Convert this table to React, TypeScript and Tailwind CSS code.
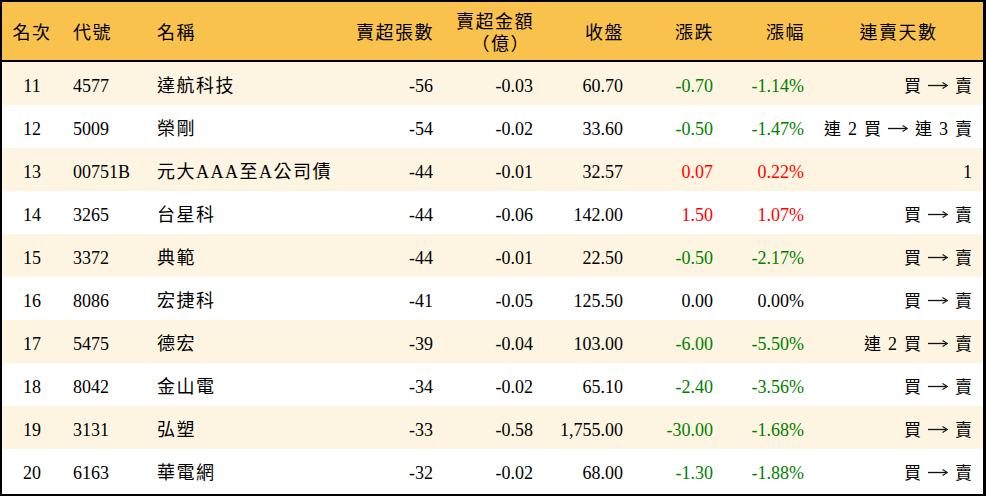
const rows = [
  { rank: 11, code: "4577", name: "達航科技", lots: "-56", amt: "-0.03", close: "60.70", chg: "-0.70", pct: "-1.14%", streak: "買 → 賣" },
  { rank: 12, code: "5009", name: "榮剛", lots: "-54", amt: "-0.02", close: "33.60", chg: "-0.50", pct: "-1.47%", streak: "連 2 買 → 連 3 賣" },
  { rank: 13, code: "00751B", name: "元大AAA至A公司債", lots: "-44", amt: "-0.01", close: "32.57", chg: "0.07", pct: "0.22%", streak: "1" },
  { rank: 14, code: "3265", name: "台星科", lots: "-44", amt: "-0.06", close: "142.00", chg: "1.50", pct: "1.07%", streak: "買 → 賣" },
  { rank: 15, code: "3372", name: "典範", lots: "-44", amt: "-0.01", close: "22.50", chg: "-0.50", pct: "-2.17%", streak: "買 → 賣" },
  { rank: 16, code: "8086", name: "宏捷科", lots: "-41", amt: "-0.05", close: "125.50", chg: "0.00", pct: "0.00%", streak: "買 → 賣" },
  { rank: 17, code: "5475", name: "德宏", lots: "-39", amt: "-0.04", close: "103.00", chg: "-6.00", pct: "-5.50%", streak: "連 2 買 → 賣" },
  { rank: 18, code: "8042", name: "金山電", lots: "-34", amt: "-0.02", close: "65.10", chg: "-2.40", pct: "-3.56%", streak: "買 → 賣" },
  { rank: 19, code: "3131", name: "弘塑", lots: "-33", amt: "-0.58", close: "1,755.00", chg: "-30.00", pct: "-1.68%", streak: "買 → 賣" },
  { rank: 20, code: "6163", name: "華電網", lots: "-32", amt: "-0.02", close: "68.00", chg: "-1.30", pct: "-1.88%", streak: "買 → 賣" },
];

function tone(v: string) {
  if (v.startsWith("-")) return "text-[#008000]";
  if (parseFloat(v) > 0) return "text-[#ff0000]";
  return "text-black";
}

function Arrow() {
  return (
    <svg width="20" height="10" viewBox="0 0 20 10" className="mt-[-3px]" aria-label="→">
      <path d="M0 5.5H18" stroke="#111" strokeWidth="1.3" />
      <path d="M14.5 2.5L19.5 5.5L14.5 8.5" fill="none" stroke="#111" strokeWidth="1.1" />
    </svg>
  );
}

function Streak({ text }: { text: string }) {
  const parts = text.split(" ");
  return (
    <div className="w-[169px] shrink-0 pr-[11px] flex justify-end items-center gap-[7px] whitespace-nowrap">
      {parts.map((p, k) =>
        p === "→" ? (
          <Arrow key={k} />
        ) : (
          <span key={k} className={/\d/.test(p) ? "text-[18px]" : "text-[17px]"}>
            {p}
          </span>
        )
      )}
    </div>
  );
}

export default function App() {
  return (
    <div
      className="w-[986px] h-[496px] bg-white text-black text-[18px] border-2 border-r-[3px] border-black overflow-hidden"
      style={{ fontFamily: '"Liberation Serif", "Noto Sans CJK TC", serif' }}
    >
      <div className="flex h-[60px] items-center pt-[4px] bg-[#f9c24d] border-b-2 border-black tracking-[1.5px] *:shrink-0">
        <div className="w-[60px] text-center">名次</div>
        <div className="w-[85px] pl-[11px]">代號</div>
        <div className="w-[193px] pl-[10px]">名稱</div>
        <div className="w-[103px] pr-[9px] text-right">賣超張數</div>
        <div className="w-[100px] pr-[9px] text-right leading-[22px]">
          <div>賣超金額</div>
          <div className="pr-[4px]">（億）</div>
        </div>
        <div className="w-[90px] pr-[9px] text-right">收盤</div>
        <div className="w-[90px] pr-[9px] text-right">漲跌</div>
        <div className="w-[91px] pr-[9px] text-right">漲幅</div>
        <div className="flex-1 text-center">連賣天數</div>
      </div>
      {rows.map((r, i) => (
        <div key={r.rank} className={`flex h-[43px] items-center pt-[6px] *:shrink-0 ${i % 2 === 0 ? "bg-[#fdf5e1]" : "bg-white"}`}>
          <div className="w-[60px] text-center">{r.rank}</div>
          <div className="w-[85px] pl-[11px]">{r.code}</div>
          <div className="w-[193px] pl-[10px] tracking-[1.5px]">{r.name}</div>
          <div className="w-[103px] pr-[10px] text-right">{r.lots}</div>
          <div className="w-[100px] pr-[10px] text-right">{r.amt}</div>
          <div className="w-[90px] pr-[10px] text-right">{r.close}</div>
          <div className={`w-[90px] pr-[10px] text-right ${tone(r.chg)}`}>{r.chg}</div>
          <div className={`w-[91px] pr-[10px] text-right ${tone(r.pct)}`}>{r.pct}</div>
          <Streak text={r.streak} />
        </div>
      ))}
    </div>
  );
}
